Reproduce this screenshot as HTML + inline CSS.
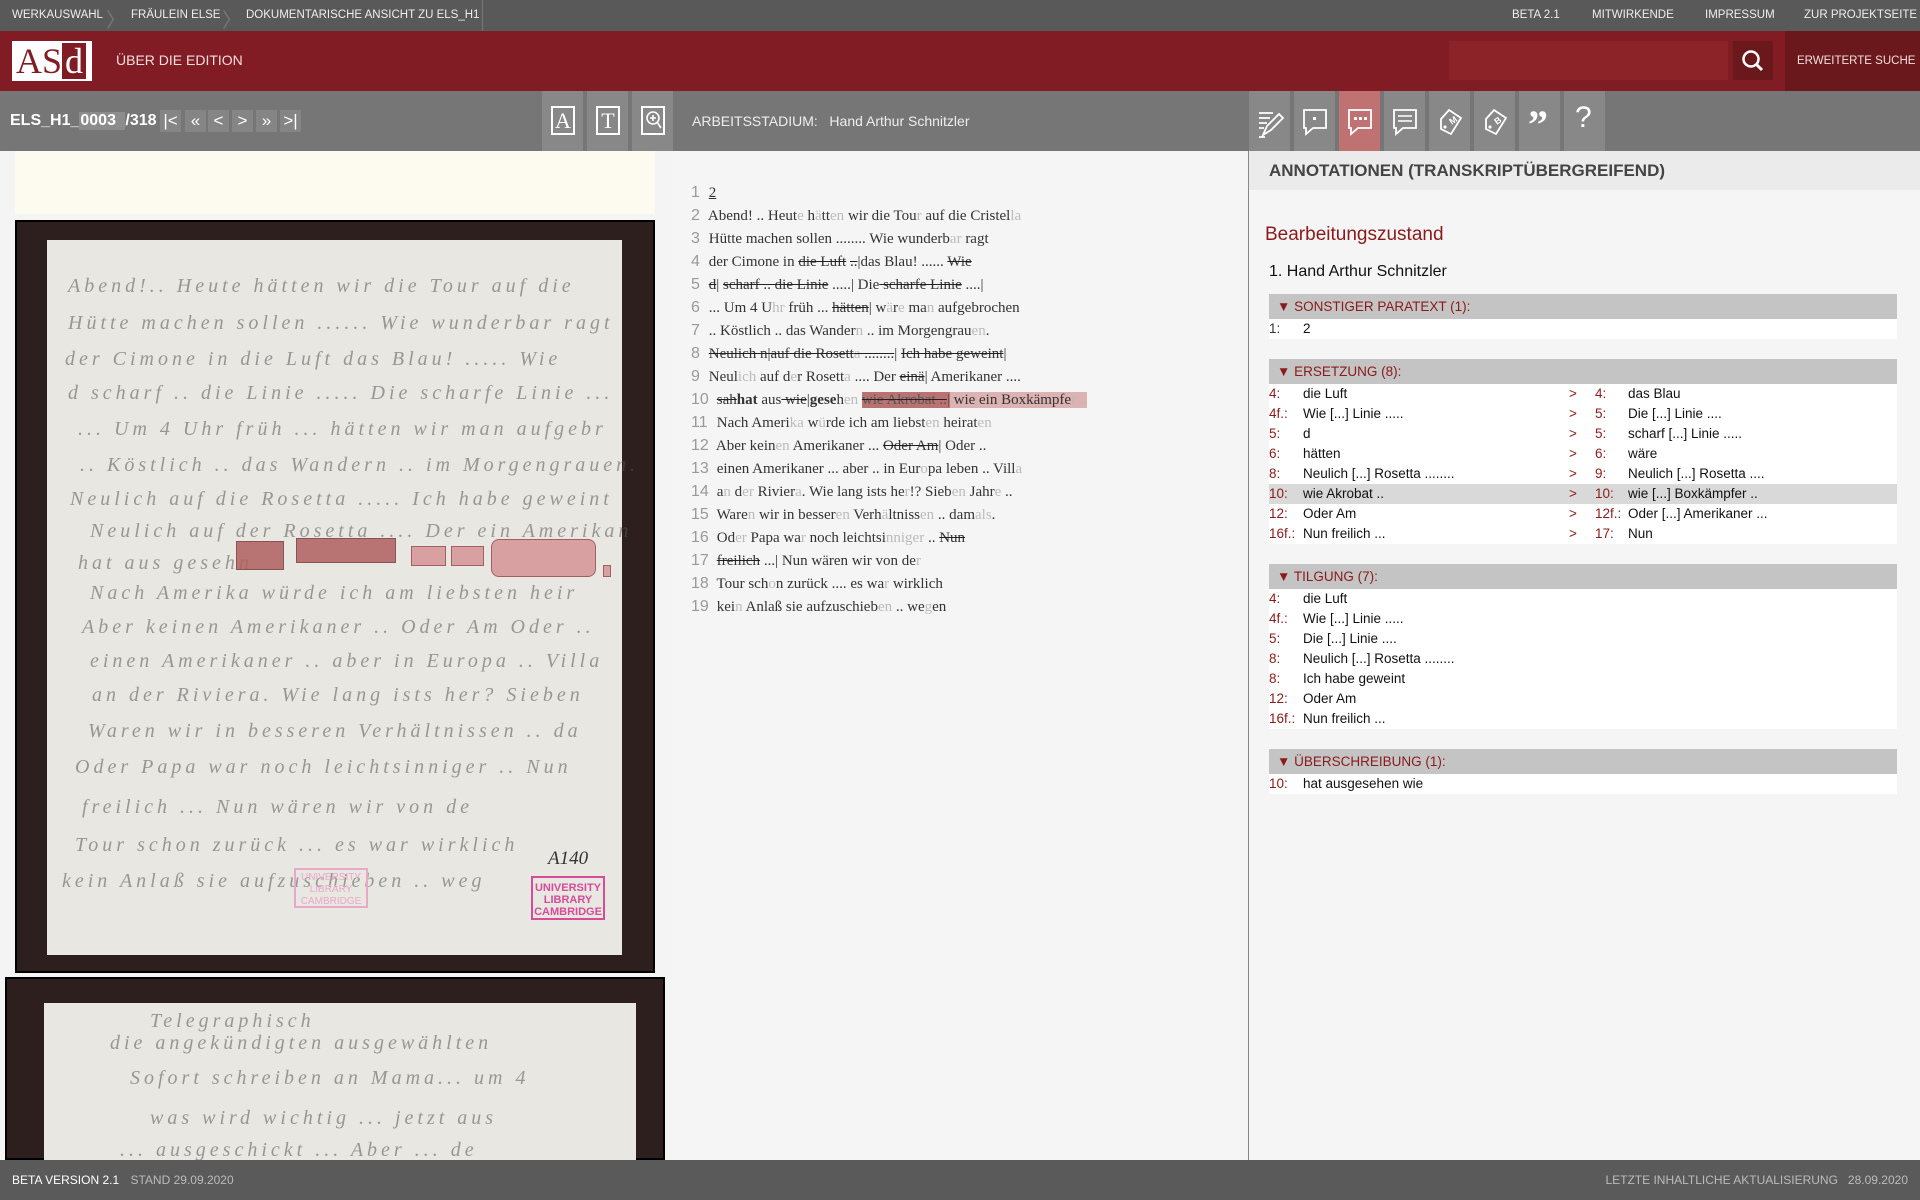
<!DOCTYPE html>
<html><head><meta charset="utf-8"><style>
*{margin:0;padding:0;box-sizing:border-box}
body{width:1920px;height:1200px;overflow:hidden;font-family:"Liberation Sans",sans-serif;background:#f4f4f4;position:relative}
.abs{position:absolute}
#top{left:0;top:0;width:1920px;height:31px;background:#595959;color:#eee;font-size:11.5px}
#top span{position:absolute;top:9px;white-space:nowrap}
#hdr{left:0;top:31px;width:1920px;height:60px;background:#821c24}
#tb{left:0;top:91px;width:1920px;height:60px;background:#767676}
.nb{position:absolute;top:110px;width:21px;height:22px;background:#858585;color:#fff;font-size:17px;text-align:center;line-height:21px}
.ib{position:absolute;top:91px;width:41px;height:60px;background:#888}
#foot{left:0;top:1160px;width:1920px;height:40px;background:#5a5a5a;color:#ddd;font-size:12px}
#mid{left:671px;top:151px;width:577px;height:1009px;background:#f5f5f5}
.ln{position:absolute;left:20px;font-family:"Liberation Serif",serif;font-size:15px;color:#333;white-space:nowrap}
.ln i{font-style:normal;color:#999;font-family:"Liberation Sans",sans-serif;font-size:16px;display:inline-block;width:14px}
.ln i.w{width:22px}
g{color:#bbb}
s{text-decoration:line-through;text-decoration-color:#222}
#right{left:1248px;top:151px;width:672px;height:1009px;background:#f5f5f5;border-left:1px solid #888}
.sh{position:absolute;left:20px;width:628px;height:25px;background:#c4c4c4;color:#8b1a1a;font-size:13.5px;line-height:25px;padding-left:8px}
.rw{position:absolute;left:20px;width:628px;height:20px;background:#fff;font-size:13.5px;line-height:20px;color:#111;white-space:nowrap}
.rw b{font-weight:normal;color:#8b1a1a;position:absolute;left:0}
.rw span{position:absolute}
.paper{position:absolute;background:#e9e7e1}
.hw{position:absolute;font-family:"Liberation Serif",serif;font-style:italic;color:#555;font-size:20px;white-space:nowrap;letter-spacing:4px;opacity:.55}
</style></head><body>
<div id="top" class="abs">
<span style="left:12px">WERKAUSWAHL</span><span style="left:106px;color:#777;top:4px;font-size:20px">〉</span>
<span style="left:131px">FRÄULEIN ELSE</span><span style="left:222px;color:#777;top:4px;font-size:20px">〉</span>
<span style="left:246px">DOKUMENTARISCHE ANSICHT ZU ELS_H1</span>
<div class="abs" style="left:482px;top:0;width:1px;height:31px;background:#777"></div>
<span style="left:1512px">BETA 2.1</span><span style="left:1592px">MITWIRKENDE</span><span style="left:1705px">IMPRESSUM</span><span style="left:1804px">ZUR PROJEKTSEITE</span>
</div>
<div id="hdr" class="abs">
<div class="abs" style="left:12px;top:10px;width:80px;height:40px;background:#fff;border:2px solid #fff;font-family:'Liberation Serif',serif;font-size:36px;line-height:36px;overflow:hidden"><span style="color:#821c24;padding-left:2px">AS</span><span style="background:#821c24;color:#fff;display:inline-block;padding:0 3px">d</span></div>
<div class="abs" style="left:116px;top:21px;color:#f2dede;font-size:14px">ÜBER DIE EDITION</div>
<div class="abs" style="left:1449px;top:10px;width:279px;height:39px;background:#8c2329"></div>
<div class="abs" style="left:1733px;top:10px;width:40px;height:39px;background:#6b181d"><svg width="40" height="39"><circle cx="18" cy="18" r="7.5" fill="none" stroke="#fff" stroke-width="2.5"/><line x1="23.5" y1="23.5" x2="29" y2="29" stroke="#fff" stroke-width="3"/></svg></div>
<div class="abs" style="left:1785px;top:0;width:135px;height:60px;background:#6b181d;color:#f2dede;font-size:11.5px;line-height:60px;padding-left:12px;white-space:nowrap">ERWEITERTE SUCHE</div>
</div>
<div id="tb" class="abs">
<div class="abs" style="left:10px;top:21px;color:#fff;font-weight:bold;font-size:16px">ELS_H1_<span style="background:#8c8c8c;display:inline-block;width:46px;padding-left:1px">0003</span>/318</div>
</div>
<div class="nb" style="left:160px">|&lt;</div><div class="nb" style="left:185px">«</div><div class="nb" style="left:208px">&lt;</div><div class="nb" style="left:232px">&gt;</div><div class="nb" style="left:256px">»</div><div class="nb" style="left:280px">&gt;|</div>
<div class="ib" style="left:542px"><div class="abs" style="left:9px;top:15px;width:24px;height:29px;border:2px solid #fff;color:#fff;font-family:'Liberation Serif',serif;font-size:22px;text-align:center;line-height:26px">A</div></div>
<div class="ib" style="left:587px"><div class="abs" style="left:9px;top:15px;width:24px;height:29px;border:2px solid #fff;color:#fff;font-family:'Liberation Serif',serif;font-size:22px;text-align:center;line-height:26px">T</div></div>
<div class="ib" style="left:632px"><div class="abs" style="left:9px;top:15px;width:24px;height:29px;border:2px solid #fff"><svg width="20" height="25"><circle cx="10" cy="10" r="6" fill="none" stroke="#fff" stroke-width="1.6"/><path d="M7 10h6M10 7v6M14 14l4 6" stroke="#fff" stroke-width="1.6"/></svg></div></div>
<div class="abs" style="left:692px;top:113px;color:#eee;font-size:14px">ARBEITSSTADIUM:&nbsp;&nbsp; Hand Arthur Schnitzler</div>
<div class="ib" style="left:1249px"><svg width="41" height="60"><path d="M10 22h14M10 27h11M10 32h8M10 37h5M14 44l4-9 12-12 4 4-12 12zM10 46h6" fill="none" stroke="#fff" stroke-width="1.8"/></svg></div>
<div class="ib" style="left:1294px"><svg width="41" height="60"><path d="M10 19h22v18H19l-7 6v-6h-2z" fill="none" stroke="#fff" stroke-width="1.8"/><rect x="19" y="26" width="3" height="3" fill="#fff"/></svg></div>
<div class="ib" style="left:1339px;background:#c07272"><svg width="41" height="60"><path d="M10 19h22v18H19l-7 6v-6h-2z" fill="none" stroke="#fff" stroke-width="1.8"/><rect x="15" y="26" width="3" height="3" fill="#fff"/><rect x="20" y="26" width="3" height="3" fill="#fff"/><rect x="25" y="26" width="3" height="3" fill="#fff"/></svg></div>
<div class="ib" style="left:1384px"><svg width="41" height="60"><path d="M10 19h22v18H19l-7 6v-6h-2z" fill="none" stroke="#fff" stroke-width="1.8"/><path d="M14 25h14M14 30h14" stroke="#fff" stroke-width="1.6"/></svg></div>
<div class="ib" style="left:1429px"><svg width="41" height="60"><path d="M20 19l12 8-10 16-10-5v-10z" fill="none" stroke="#fff" stroke-width="1.8"/><circle cx="16" cy="36" r="1.6" fill="#fff"/><text x="21" y="34" font-size="9" fill="#fff" font-weight="bold" font-family="Liberation Sans" transform="rotate(-35 22 31)">M</text></svg></div>
<div class="ib" style="left:1474px"><svg width="41" height="60"><path d="M20 19l12 8-10 16-10-5v-10z" fill="none" stroke="#fff" stroke-width="1.8"/><circle cx="16" cy="36" r="1.6" fill="#fff"/><text x="21" y="34" font-size="9" fill="#fff" font-weight="bold" font-family="Liberation Sans" transform="rotate(-35 22 31)">B</text></svg></div>
<div class="ib" style="left:1519px"><div class="abs" style="left:9px;top:10px;color:#fff;font-size:40px;font-weight:bold;font-family:'Liberation Serif',serif">”</div></div>
<div class="ib" style="left:1564px"><div class="abs" style="left:11px;top:10px;color:#fff;font-size:30px">?</div></div>

<div class="abs" style="left:15px;top:151px;width:640px;height:63px;background:#fdfaf0"></div>
<div class="abs" style="left:15px;top:220px;width:640px;height:753px;background:#2e1f1f;border:2px solid #000"></div>
<div class="paper" style="left:47px;top:240px;width:575px;height:715px"></div>
<div class="abs" style="left:5px;top:977px;width:660px;height:183px;background:#2e1f1f;border:2px solid #000"></div>
<div class="paper" style="left:44px;top:1003px;width:592px;height:157px"></div>
<div class="hw" style="left:68px;top:275px">Abend!.. Heute hätten wir die Tour auf die</div>
<div class="hw" style="left:68px;top:312px">Hütte machen sollen ...... Wie wunderbar ragt</div>
<div class="hw" style="left:65px;top:348px">der Cimone in die Luft das Blau! ..... Wie</div>
<div class="hw" style="left:68px;top:382px">d scharf .. die Linie ..... Die scharfe Linie ...</div>
<div class="hw" style="left:78px;top:418px">... Um 4 Uhr früh ... hätten wir man aufgebr</div>
<div class="hw" style="left:80px;top:454px">.. Köstlich .. das Wandern .. im Morgengrauen.</div>
<div class="hw" style="left:70px;top:488px">Neulich auf die Rosetta ..... Ich habe geweint</div>
<div class="hw" style="left:90px;top:520px">Neulich auf der Rosetta .... Der ein Amerikan</div>
<div class="hw" style="left:78px;top:552px">hat aus gesehn</div>
<div class="abs" style="left:236px;top:541px;width:48px;height:29px;background:#b06060;opacity:.85;border:1px solid #7a3a3a"></div>
<div class="abs" style="left:296px;top:538px;width:100px;height:25px;background:#b06060;opacity:.85;border:1px solid #7a3a3a"></div>
<div class="abs" style="left:411px;top:546px;width:35px;height:20px;background:#d8a0a0;border:1px solid #a06060"></div>
<div class="abs" style="left:451px;top:546px;width:33px;height:20px;background:#d8a0a0;border:1px solid #a06060"></div>
<div class="abs" style="left:491px;top:539px;width:105px;height:38px;background:#d8a0a0;border:1px solid #a06060;border-radius:8px"></div>
<div class="abs" style="left:603px;top:565px;width:8px;height:12px;background:#d8a0a0;border:1px solid #a06060"></div>
<div class="hw" style="left:90px;top:582px">Nach Amerika würde ich am liebsten heir</div>
<div class="hw" style="left:82px;top:616px">Aber keinen Amerikaner .. Oder Am Oder ..</div>
<div class="hw" style="left:90px;top:650px">einen Amerikaner .. aber in Europa .. Villa</div>
<div class="hw" style="left:92px;top:684px">an der Riviera. Wie lang ists her? Sieben</div>
<div class="hw" style="left:88px;top:720px">Waren wir in besseren Verhältnissen .. da</div>
<div class="hw" style="left:75px;top:756px">Oder Papa war noch leichtsinniger .. Nun</div>
<div class="hw" style="left:82px;top:796px">freilich ... Nun wären wir von de</div>
<div class="hw" style="left:75px;top:834px">Tour schon zurück ... es war wirklich</div>
<div class="hw" style="left:62px;top:870px">kein Anlaß sie aufzuschieben .. weg</div>
<div class="abs" style="left:548px;top:848px;font-size:19px;color:#333;font-family:'Liberation Serif',serif;font-style:italic">A140</div>
<div class="abs" style="left:294px;top:868px;width:74px;height:40px;border:2px solid #e8a8c8;color:#e8a8c8;font-size:10px;text-align:center;line-height:12px;padding-top:2px">UNIVERSITY<br>LIBRARY<br>CAMBRIDGE</div>
<div class="abs" style="left:531px;top:876px;width:74px;height:44px;border:2px solid #d64b9a;color:#d64b9a;font-size:11px;font-weight:bold;text-align:center;line-height:12px;padding-top:4px">UNIVERSITY<br>LIBRARY<br>CAMBRIDGE</div>
<div class="hw" style="left:150px;top:1010px">Telegraphisch</div>
<div class="hw" style="left:110px;top:1032px">die angekündigten ausgewählten</div>
<div class="hw" style="left:130px;top:1067px">Sofort schreiben an Mama... um 4</div>
<div class="hw" style="left:150px;top:1107px">was wird wichtig ... jetzt aus</div>
<div class="hw" style="left:120px;top:1139px">... ausgeschickt ... Aber ... de</div>

<div id="mid" class="abs">
<div class="ln" style="top:33px"><i>1</i> <u>2</u></div>
<div class="ln" style="top:56px"><i>2</i> Abend! .. Heut<g>e</g> h<g>ä</g>tt<g>en</g> wir die Tou<g>r</g> auf die Cristel<g>la</g></div>
<div class="ln" style="top:79px"><i>3</i> Hütte machen sollen ........ Wie wunderb<g>ar</g> ragt</div>
<div class="ln" style="top:102px"><i>4</i> der Cimone in <s>die Luft</s> <s>..</s>|das Blau! ...... <s>Wie</s></div>
<div class="ln" style="top:125px"><i>5</i> <s>d</s>| <s>scharf .. die Linie</s> .....| Die<s> scharfe Linie</s> ....|</div>
<div class="ln" style="top:148px"><i>6</i> ... Um 4 U<g>hr</g> früh ... <s>hätten</s>| w<g>ä</g>r<g>e</g> ma<g>n</g> aufgebrochen</div>
<div class="ln" style="top:171px"><i>7</i> .. Köstlich .. das Wander<g>n</g> .. im Morgengrau<g>en</g>.</div>
<div class="ln" style="top:194px"><i>8</i> <s>Neulich n|auf die Rosett<g>a</g> ........</s>| <s>Ich habe geweint</s>|</div>
<div class="ln" style="top:217px"><i>9</i> Neul<g>ich</g> auf d<g>e</g>r Rosett<g>a</g> .... Der <s>einä</s>| Amerikaner ....</div>
<div class="ln" style="top:240px"><i class="w">10</i> <s>sah</s><b>hat</b> aus<s> wie</s>|<b>gese</b>h<g>en</g> <span style="background:#b87272;color:#555"><s>wie Akrobat ..</s>|</span><span style="background:#dcb2b2"> wie ein Boxkämpfe<g>r ..</g></span></div>
<div class="ln" style="top:263px"><i class="w">11</i> Nach Ameri<g>ka</g> w<g>ü</g>rde ich am liebst<g>en</g> heirat<g>en</g></div>
<div class="ln" style="top:286px"><i class="w">12</i> Aber kein<g>en</g> Amerikaner ... <s>Oder Am</s>| Oder ..</div>
<div class="ln" style="top:309px"><i class="w">13</i> einen Amerikaner ... aber .. in Eur<g>o</g>pa leben .. Vill<g>a</g></div>
<div class="ln" style="top:332px"><i class="w">14</i> a<g>n</g> d<g>er</g> Rivier<g>a</g>. Wie lang ists he<g>r</g>!? Sieb<g>en</g> Jahr<g>e</g> ..</div>
<div class="ln" style="top:355px"><i class="w">15</i> Ware<g>n</g> wir in besser<g>en</g> Verh<g>ä</g>ltniss<g>en</g> .. dam<g>als</g>.</div>
<div class="ln" style="top:378px"><i class="w">16</i> Od<g>er</g> Papa wa<g>r</g> noch leichtsi<g>nniger</g> .. <s>Nun</s></div>
<div class="ln" style="top:401px"><i class="w">17</i> <s>freilich</s> ...| Nun wären wir von de<g>r</g></div>
<div class="ln" style="top:424px"><i class="w">18</i> Tour sch<g>o</g>n zurück .... es wa<g>r</g> wirklich</div>
<div class="ln" style="top:447px"><i class="w">19</i> kei<g>n</g> Anlaß sie aufzuschieb<g>en</g> .. we<g>g</g>en</div>
</div>

<div id="right" class="abs">
<div class="abs" style="left:0;top:0;width:672px;height:39px;background:#ebebeb;color:#444;font-weight:bold;font-size:17px;line-height:39px;padding-left:20px">ANNOTATIONEN (TRANSKRIPTÜBERGREIFEND)</div>
<div class="abs" style="left:16px;top:73px;color:#8b1a1a;font-size:19px">Bearbeitungszustand</div>
<div class="abs" style="left:20px;top:112px;color:#111;font-size:16px">1. Hand Arthur Schnitzler</div>
<div class="sh" style="top:143px">▼ SONSTIGER PARATEXT (1):</div>
<div class="rw" style="top:168px"><b style="color:#333">1:</b><span style="left:34px">2</span></div>
<div class="sh" style="top:208px">▼ ERSETZUNG (8):</div>
<div class="rw" style="top:233px"><b>4:</b><span style="left:34px">die Luft</span><span style="left:300px;color:#8b1a1a">&gt;</span><b style="left:326px">4:</b><span style="left:359px">das Blau</span></div>
<div class="rw" style="top:253px"><b>4f.:</b><span style="left:34px">Wie [...] Linie .....</span><span style="left:300px;color:#8b1a1a">&gt;</span><b style="left:326px">5:</b><span style="left:359px">Die [...] Linie ....</span></div>
<div class="rw" style="top:273px"><b>5:</b><span style="left:34px">d</span><span style="left:300px;color:#8b1a1a">&gt;</span><b style="left:326px">5:</b><span style="left:359px">scharf [...] Linie .....</span></div>
<div class="rw" style="top:293px"><b>6:</b><span style="left:34px">hätten</span><span style="left:300px;color:#8b1a1a">&gt;</span><b style="left:326px">6:</b><span style="left:359px">wäre</span></div>
<div class="rw" style="top:313px"><b>8:</b><span style="left:34px">Neulich [...] Rosetta ........</span><span style="left:300px;color:#8b1a1a">&gt;</span><b style="left:326px">9:</b><span style="left:359px">Neulich [...] Rosetta ....</span></div>
<div class="rw" style="top:333px;background:#d9d9d9"><b>10:</b><span style="left:34px">wie Akrobat ..</span><span style="left:300px;color:#8b1a1a">&gt;</span><b style="left:326px">10:</b><span style="left:359px">wie [...] Boxkämpfer ..</span></div>
<div class="rw" style="top:353px"><b>12:</b><span style="left:34px">Oder Am</span><span style="left:300px;color:#8b1a1a">&gt;</span><b style="left:326px">12f.:</b><span style="left:359px">Oder [...] Amerikaner ...</span></div>
<div class="rw" style="top:373px"><b>16f.:</b><span style="left:34px">Nun freilich ...</span><span style="left:300px;color:#8b1a1a">&gt;</span><b style="left:326px">17:</b><span style="left:359px">Nun</span></div>
<div class="sh" style="top:413px">▼ TILGUNG (7):</div>
<div class="rw" style="top:438px"><b>4:</b><span style="left:34px">die Luft</span></div>
<div class="rw" style="top:458px"><b>4f.:</b><span style="left:34px">Wie [...] Linie .....</span></div>
<div class="rw" style="top:478px"><b>5:</b><span style="left:34px">Die [...] Linie ....</span></div>
<div class="rw" style="top:498px"><b>8:</b><span style="left:34px">Neulich [...] Rosetta ........</span></div>
<div class="rw" style="top:518px"><b>8:</b><span style="left:34px">Ich habe geweint</span></div>
<div class="rw" style="top:538px"><b>12:</b><span style="left:34px">Oder Am</span></div>
<div class="rw" style="top:558px"><b>16f.:</b><span style="left:34px">Nun freilich ...</span></div>
<div class="sh" style="top:598px">▼ ÜBERSCHREIBUNG (1):</div>
<div class="rw" style="top:623px"><b>10:</b><span style="left:34px">hat ausgesehen wie</span></div>
</div>

<div id="foot" class="abs">
<div class="abs" style="left:12px;top:13px;color:#fff">BETA VERSION 2.1 <span style="color:#bbb;margin-left:8px">STAND 29.09.2020</span></div>
<div class="abs" style="right:12px;top:13px;color:#bbb">LETZTE INHALTLICHE AKTUALISIERUNG &nbsp; 28.09.2020</div>
</div>
</body></html>
